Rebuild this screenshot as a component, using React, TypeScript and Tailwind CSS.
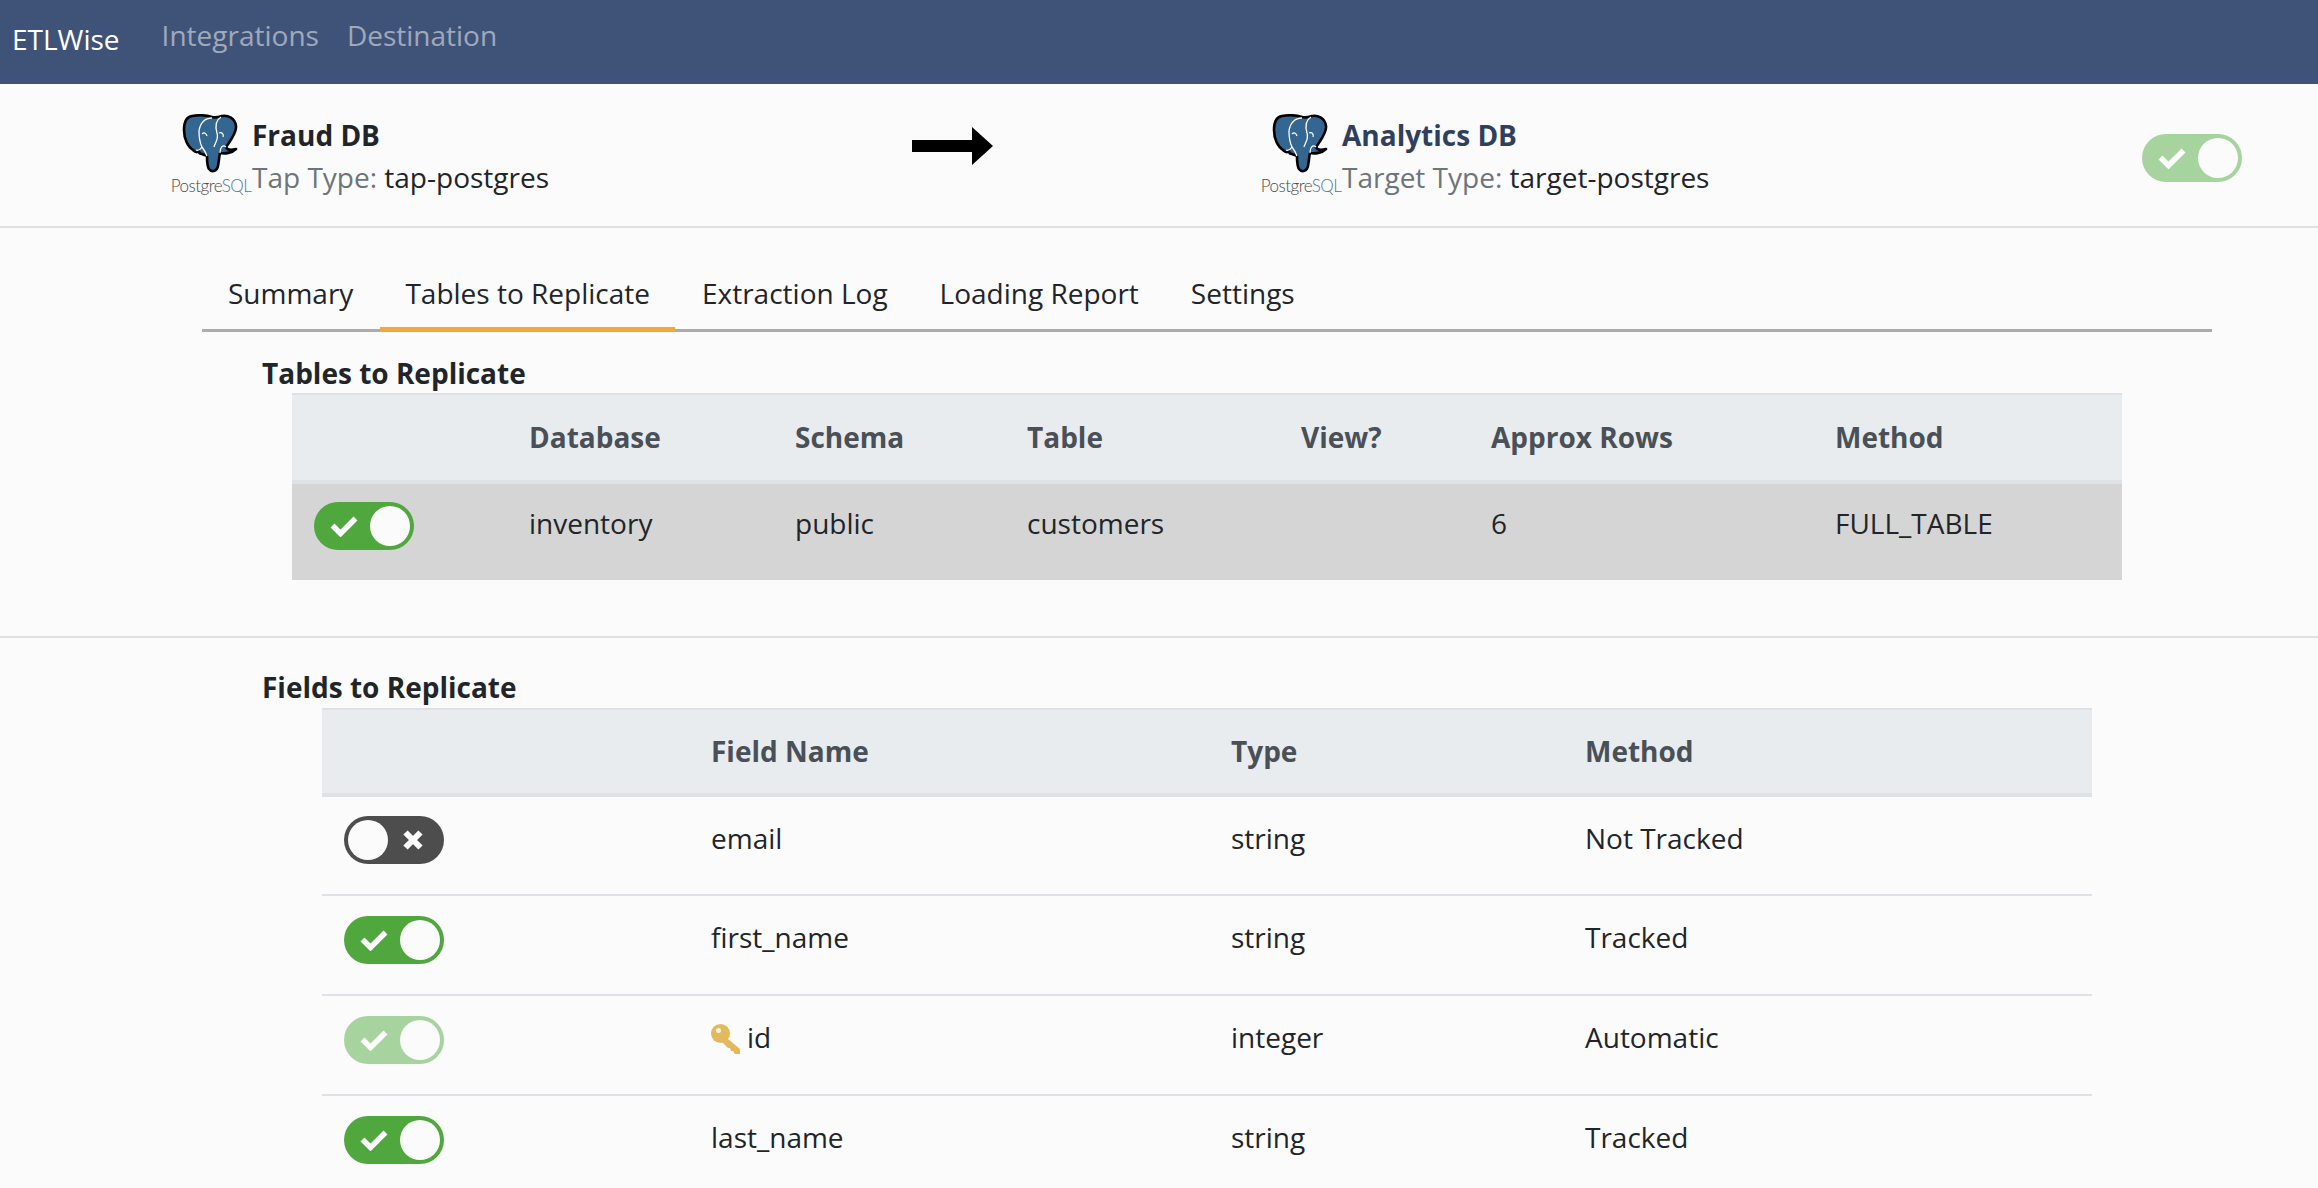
import React from 'react';

const tableRows = [
  { database: 'inventory', schema: 'public', table: 'customers', view: '', rows: '6', method: 'FULL_TABLE' },
];

const fieldRows = [
  { state: 'off', name: 'email', type: 'string', method: 'Not Tracked' },
  { state: 'on', name: 'first_name', type: 'string', method: 'Tracked' },
  { state: 'locked', name: 'id', type: 'integer', method: 'Automatic', isKey: true },
  { state: 'on', name: 'last_name', type: 'string', method: 'Tracked' },
];

const tabs = ['Summary', 'Tables to Replicate', 'Extraction Log', 'Loading Report', 'Settings'];

// Elephant + wordmark
const PostgresLogo = () => (
  <div className="w-[82px] shrink-0 flex flex-col items-center">
    <svg width="56" height="60" viewBox="0 0 56 60" className="ml-[-2px]">
      <path
        d="M10 2C4 3 2 9 2 16C2 25 6 33 11 36C13 38 15 39 17 37C17 39 18 40 20 40C22 41 24 41 25 42C25 47 25 52 27 55C30 59 35 57 36 52C37 47 37 43 38 39C43 40 50 39 54 35C50 36 45 36 44 33C48 27 55 19 54 12C53 4 46 1 40 2C37 3 33 4 30 3C24 1 16 1 10 2Z"
        fill="#336791"
        stroke="#000"
        strokeWidth="2.600"
        strokeLinejoin="round"
      />
      <path
        d="M30 4C23 4 18 9 17 17C17 24 18 29 20 33C18 36 16 37 14 36M39 3C34 6 33 12 35 19C37 25 33 29 32 33M20 33C23 37 24 39 25 42"
        fill="none"
        stroke="#fff"
        strokeWidth="1.300"
      />
      <path d="M20 20C22 18 24 19 25 22M37 19C40 18 42 20 41 23M44 33C41 30 38 33 38 39" fill="none" stroke="#fff" strokeWidth="1.200" />
    </svg>
    <div className="mt-[2px] text-[17px] leading-[20px] tracking-[-0.5px] font-['Lato',sans-serif] font-light whitespace-nowrap">
      <span className="text-[#4a4a4a]">Postgre</span>
      <span className="text-[#4d77a3]">SQL</span>
    </div>
  </div>
);

const Toggle = ({ state }: { state: string }) => {
  const on = state !== 'off';
  const bg = state === 'off' ? 'bg-[#4d4d4d]' : state === 'locked' ? 'bg-[#a7d39e]' : 'bg-[#50a73e]';
  return (
    <div className={`w-[100px] h-[48px] rounded-full p-[4px] flex items-center justify-between ${bg} ${on ? '' : 'flex-row-reverse'}`}>
      {on ? (
        <svg width="28" height="22" viewBox="0 0 28 22" className="ml-[12px]">
          <path d="M2.500 10.500L10.500 18.500L25.500 3.500" fill="none" stroke="#fff" strokeWidth="5.500" />
        </svg>
      ) : (
        <svg width="22" height="22" viewBox="0 0 22 22" className="mr-[16px]">
          <path d="M3.500 3.500L18.500 18.500M18.500 3.500L3.500 18.500" fill="none" stroke="#fff" strokeWidth="6" />
        </svg>
      )}
      <div className="w-[40px] h-[40px] rounded-full bg-[#fbfbfb]" />
    </div>
  );
};

const KeyIcon = () => (
  <svg width="30" height="30" viewBox="0 0 30 30" className="inline-block mr-[6px] align-[-6px] w-[30px] h-[30px]">
    <path d="M11 10L29 25L29 30L24 30L22 27L20 27L19 24L17 24L8 15Z" fill="#e3b95d" />
    <circle cx="9.500" cy="9.500" r="9.500" fill="#e3b95d" />
    <circle cx="7.500" cy="6.500" r="2.500" fill="#fbf3df" />
  </svg>
);

const Connector = ({ name, label, value, nameClass }: { name: string; label: string; value: string; nameClass: string }) => (
  <div className="flex items-start">
    <PostgresLogo />
    <div className="mt-[1px]">
      <div className={`text-[28px] leading-[40px] font-bold ${nameClass}`}>{name}</div>
      <div className="text-[28px] leading-[40px] mt-[2px] whitespace-nowrap">
        <span className="text-[#6c757d]">{label}</span> <span className="text-[#212529]">{value}</span>
      </div>
    </div>
  </div>
);

const App: React.FC = () => {
  return (
    <div className="w-[2318px] h-[1188px] overflow-hidden bg-[#fbfbfb] text-[#212529] font-['Open_Sans',sans-serif]">
      {/* navbar */}
      <nav className="h-[84px] bg-[#3f5379] flex items-start pl-[12px]">
        <span className="text-white text-[28px] leading-[40px] mt-[19px]">ETLWise</span>
        <span className="text-white/50 text-[28px] leading-[40px] mt-[15px] ml-[42px]">Integrations</span>
        <span className="text-white/50 text-[28px] leading-[40px] mt-[15px] ml-[28px]">Destination</span>
      </nav>

      {/* connection header */}
      <div className="h-[144px] border-b-[2px] border-[#dfdfdf] flex items-start pl-[170px] pr-[76px]">
        <div className="w-[742px] pt-[30px] shrink-0">
          <Connector name="Fraud DB" label="Tap Type:" value="tap-postgres" nameClass="text-[#212529]" />
        </div>
        <svg width="82" height="38" viewBox="0 0 82 38" className="mt-[43px] shrink-0">
          <path d="M0 13H60V0L81 19L60 38V25H0Z" fill="#000" />
        </svg>
        <div className="ml-[266px] pt-[30px] flex-1">
          <Connector name="Analytics DB" label="Target Type:" value="target-postgres" nameClass="text-[#2f3f60]" />
        </div>
        <div className="mt-[50px] shrink-0">
          <Toggle state="locked" />
        </div>
      </div>

      {/* tabs */}
      <div className="ml-[202px] mr-[106px] mt-[31px] h-[73px] pl-[1px] border-b-[3px] border-[#ababab] flex items-start gap-[2px]">
        {tabs.map(t => (
          <div
            key={t}
            className={`h-[73px] px-[25px] text-[28px] leading-[40px] pt-[14px] whitespace-nowrap ${t === 'Tables to Replicate' ? 'border-b-[5px] border-[#f2a93b]' : ''}`}
          >
            {t}
          </div>
        ))}
      </div>

      {/* tables */}
      <h2 className="ml-[262px] mt-[21px] h-[40px] text-[28px] leading-[40px] font-bold">Tables to Replicate</h2>
      <table className="ml-[292px] w-[1830px] table-fixed border-collapse">
        <colgroup>
          <col className="w-[215px]" />
          <col className="w-[266px]" />
          <col className="w-[232px]" />
          <col className="w-[274px]" />
          <col className="w-[190px]" />
          <col className="w-[344px]" />
          <col className="w-[309px]" />
        </colgroup>
        <thead>
          <tr className="h-[88px] bg-[#e9ecef] text-[#495057] text-[28px] font-bold text-left border-t-[2px] border-b-[4px] border-[#dee2e6]">
            <th></th>
            <th className="px-[22px] pb-[2px] font-bold">Database</th>
            <th className="px-[22px] pb-[2px] font-bold">Schema</th>
            <th className="px-[22px] pb-[2px] font-bold">Table</th>
            <th className="px-[22px] pb-[2px] font-bold">View?</th>
            <th className="px-[22px] pb-[2px] font-bold">Approx Rows</th>
            <th className="px-[22px] pb-[2px] font-bold">Method</th>
          </tr>
        </thead>
        <tbody>
          {tableRows.map(r => (
            <tr key={r.table} className="h-[98px] bg-[#d5d5d5] text-[28px]">
              <td className="pl-[22px] pb-[12px]"><Toggle state="on" /></td>
              <td className="px-[22px] pb-[18px]">{r.database}</td>
              <td className="px-[22px] pb-[18px]">{r.schema}</td>
              <td className="px-[22px] pb-[18px]">{r.table}</td>
              <td className="px-[22px] pb-[18px]">{r.view}</td>
              <td className="px-[22px] pb-[18px]">{r.rows}</td>
              <td className="px-[22px] pb-[18px]">{r.method}</td>
            </tr>
          ))}
        </tbody>
      </table>

      <hr className="mt-[56px] border-t-[2px] border-[#dfdfdf]" />

      {/* fields */}
      <h2 className="ml-[262px] mt-[28px] h-[42px] text-[28px] leading-[42px] font-bold">Fields to Replicate</h2>
      <table className="ml-[322px] w-[1770px] table-fixed border-collapse">
        <colgroup>
          <col className="w-[367px]" />
          <col className="w-[520px]" />
          <col className="w-[354px]" />
          <col className="w-[529px]" />
        </colgroup>
        <thead>
          <tr className="h-[86px] bg-[#e9ecef] text-[#495057] text-[28px] font-bold text-left border-t-[2px] border-b-[4px] border-[#dee2e6]">
            <th></th>
            <th className="px-[22px] pb-[2px] font-bold">Field Name</th>
            <th className="px-[22px] pb-[2px] font-bold">Type</th>
            <th className="px-[22px] pb-[2px] font-bold">Method</th>
          </tr>
        </thead>
        <tbody>
          {fieldRows.map(f => (
            <tr key={f.name} className="h-[100px] text-[28px] border-b-[2px] border-[#dee2e6]">
              <td className="pl-[22px] pb-[11px]"><Toggle state={f.state} /></td>
              <td className="px-[22px] pb-[16px]">
                {f.isKey && <KeyIcon />}
                {f.name}
              </td>
              <td className="px-[22px] pb-[16px]">{f.type}</td>
              <td className="px-[22px] pb-[16px]">{f.method}</td>
            </tr>
          ))}
        </tbody>
      </table>
    </div>
  );
};

export default App;
